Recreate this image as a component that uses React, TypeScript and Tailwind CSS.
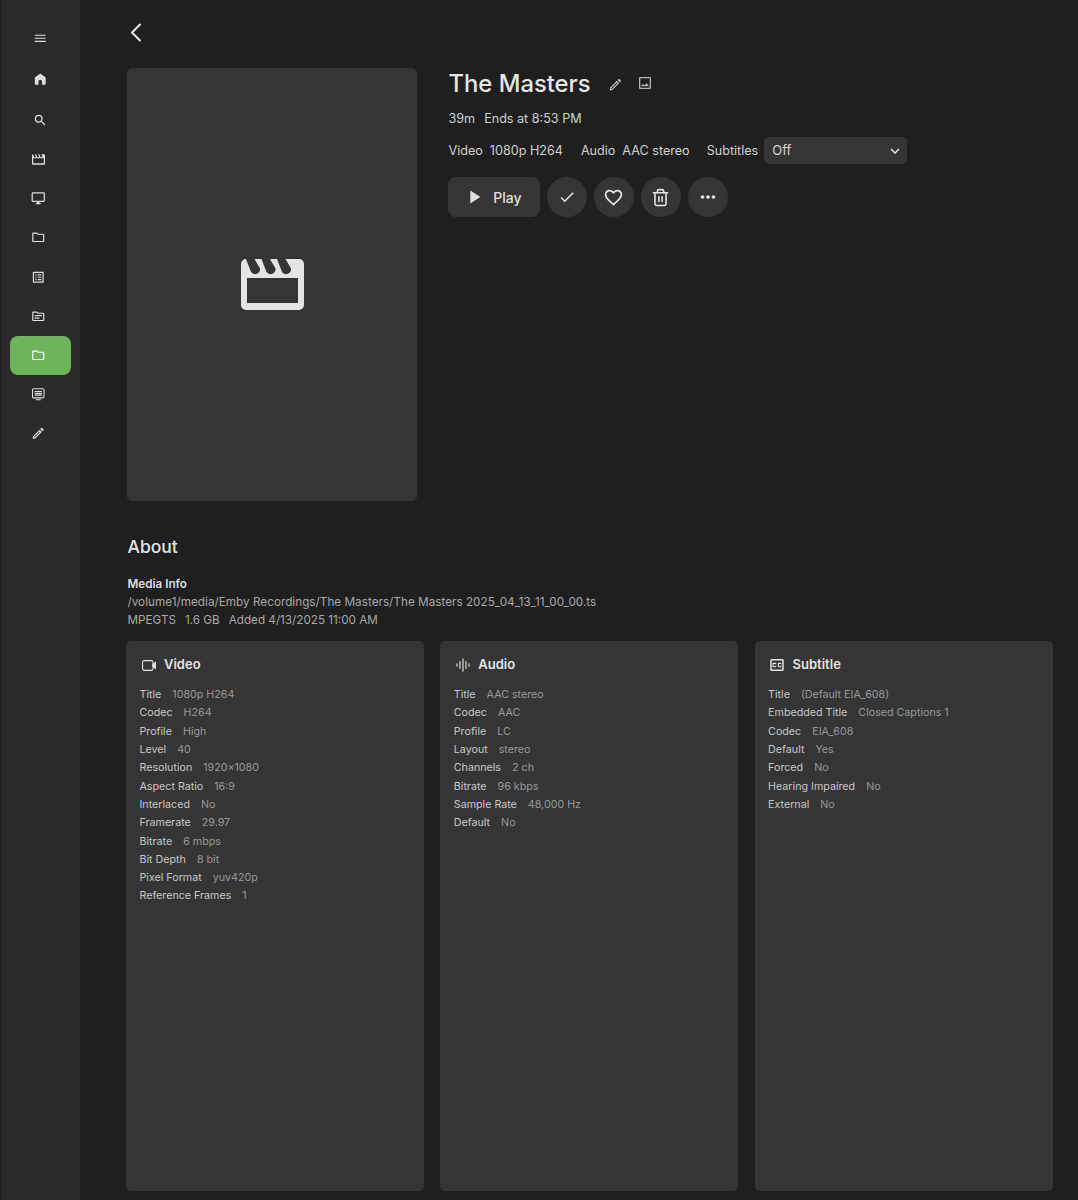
import type { ReactNode } from 'react'
import {
  MdMenu, MdSearch, MdOutlineDesktopWindows, MdOutlineFolder, MdOutlineListAlt, MdOutlineTopic,
  MdOutlineEdit, MdOutlineImage, MdCheck, MdFavoriteBorder, MdMoreHoriz, MdPlayArrow,
  MdKeyboardArrowDown, MdOutlineClosedCaption,
} from 'react-icons/md'
import { Trash2 } from 'lucide-react'

const FONT = 'font-["Inter","Liberation_Sans",sans-serif]'

// clapperboard with the slanted rounded notches, the md one has square cuts
function Clapper({ className }: { className?: string }) {
  const notch = (x: number) => `M${x + 5} 0H${x + 13.5}L${x + 19} 9.5A5 5 0 0 1 ${x + 10} 13Z`
  return (
    <svg viewBox="0 0 63 51" className={className} fill="currentColor" fillRule="evenodd">
      <path
        d={`M5 0H58A5 5 0 0 1 63 5V46A5 5 0 0 1 58 51H5A5 5 0 0 1 0 46V5A5 5 0 0 1 5 0Z M6 19V44H57V19Z ${notch(0)} ${notch(15.5)} ${notch(31)}`}
      />
    </svg>
  )
}

function HomeIcon() {
  return (
    <svg viewBox="0 0 24 24" className="size-[14.5px]" fill="currentColor">
      <path d="M12 2.5 3.6 8.8A1.5 1.5 0 0 0 3 10v9.5A1.5 1.5 0 0 0 4.5 21H9v-5a3 3 0 0 1 6 0v5h4.5a1.5 1.5 0 0 0 1.5-1.5V10a1.5 1.5 0 0 0-.6-1.2Z" />
    </svg>
  )
}

function ScreenListIcon() {
  return (
    <svg viewBox="0 0 24 24" className="size-[14.5px]" fill="none" stroke="currentColor" strokeWidth="1.8">
      <rect x="2.5" y="3" width="19" height="15" rx="2" />
      <path d="M8 21h8M6 7.5h12M6 10.5h12M6 13.5h12" />
    </svg>
  )
}

function CameraIcon() {
  return (
    <svg viewBox="0 0 14 11" className="h-[11px] w-[14px]" fill="none" stroke="currentColor" strokeWidth="1.1">
      <rect x="0.6" y="0.6" width="10.4" height="9.8" rx="1.6" />
      <path d="M11 4.5 13.4 2.6v5.8L11 6.5Z" fill="currentColor" />
    </svg>
  )
}

function WaveIcon() {
  return (
    <svg viewBox="0 0 14 14" className="size-[14px]" fill="none" stroke="currentColor" strokeWidth="1.1" strokeLinecap="round">
      <path d="M1 5.8v2.4M4 3.5v7M7 .8v12.4M10 3.5v7M13 5.8v2.4" />
    </svg>
  )
}

const NAV: { icon: ReactNode; cls?: string; active?: boolean }[] = [
  { icon: <MdMenu />, cls: 'h-[39px] pr-px' },
  { icon: <HomeIcon />, cls: 'h-[42.5px] pr-px' },
  { icon: <MdSearch />, cls: 'h-[39.2px] pr-px' },
  { icon: <Clapper className="h-[11px] w-[13px]" />, cls: 'h-[39.2px] pr-[4px]' },
  { icon: <MdOutlineDesktopWindows />, cls: 'h-[39.2px] pr-[4px]' },
  { icon: <MdOutlineFolder />, cls: 'h-[39.2px] pr-[4px]' },
  { icon: <MdOutlineListAlt />, cls: 'h-[39.2px] pr-[4px]' },
  { icon: <MdOutlineTopic />, cls: 'h-[39.2px] pr-[4px]' },
  { icon: <MdOutlineFolder />, cls: 'h-[39.2px] pr-[4px]', active: true },
  { icon: <ScreenListIcon />, cls: 'h-[39.2px] pr-[4px]' },
  { icon: <MdOutlineEdit />, cls: 'h-[39.2px] pr-[4px]' },
]

const VIDEO = [
  ['Title', '1080p H264'], ['Codec', 'H264'], ['Profile', 'High'], ['Level', '40'],
  ['Resolution', '1920x1080'], ['Aspect Ratio', '16:9'], ['Interlaced', 'No'], ['Framerate', '29.97'],
  ['Bitrate', '6 mbps'], ['Bit Depth', '8 bit'], ['Pixel Format', 'yuv420p'], ['Reference Frames', '1'],
]
const AUDIO = [
  ['Title', 'AAC stereo'], ['Codec', 'AAC'], ['Profile', 'LC'], ['Layout', 'stereo'],
  ['Channels', '2 ch'], ['Bitrate', '96 kbps'], ['Sample Rate', '48,000 Hz'], ['Default', 'No'],
]
const SUBTITLE = [
  ['Title', '(Default EIA_608)'], ['Embedded Title', 'Closed Captions 1'], ['Codec', 'EIA_608'], ['Default', 'Yes'],
  ['Forced', 'No'], ['Hearing Impaired', 'No'], ['External', 'No'],
]

function Stream({ icon, title, rows }: { icon: ReactNode; title: string; rows: string[][] }) {
  return (
    <div className="h-[550px] w-[298px] rounded-[5px] bg-[#353535] pl-[13.5px] pt-[15px]">
      <div className="flex h-[18px] items-center gap-[6.5px] text-[13px] font-semibold text-[#e4e4e4]">
        <span className="flex w-[18px] justify-center text-[18px]">{icon}</span>
        {title}
      </div>
      <div className="mt-[12px]">
        {rows.map(([k, v]) => (
          <div key={k} className="flex h-[18.3px] items-center gap-[11px] text-[10.7px]">
            <span className="text-[#c8c8c8]">{k}</span>
            <span className="text-[#999999]">{v}</span>
          </div>
        ))}
      </div>
    </div>
  )
}

function RoundBtn({ children }: { children: ReactNode }) {
  return (
    <button className="flex size-10 items-center justify-center rounded-full bg-[#353535] text-[#e4e4e4]">
      {children}
    </button>
  )
}

export default function App() {
  return (
    <div className={`flex h-[1200px] overflow-hidden bg-[#1f1f1f] ${FONT}`}>
      <aside className="flex w-20 shrink-0 flex-col border-l border-[#222] bg-[#2a2a2a] pl-[9px] pt-[19px]">
        {NAV.map((n, i) => (
          <div
            key={i}
            className={`flex w-[61px] items-center justify-center rounded-lg text-[14.5px] ${n.cls} ${n.active ? 'bg-[#6cb35a] text-white' : 'text-[#dedede]'}`}
          >
            {n.icon}
          </div>
        ))}
      </aside>

      <main className="min-w-0 flex-1 pl-[47px]">
        <div className="flex h-[68px] items-start pl-[3px] pt-[23px] text-[#e6e6e6]">
          <svg viewBox="0 0 12 19" className="h-[19px] w-[12px]" fill="none" stroke="currentColor" strokeWidth="2" strokeLinecap="round" strokeLinejoin="round">
            <path d="M10 1.5 2 9.5l8 8" />
          </svg>
        </div>

        <div className="flex">
          <div className="flex h-[433px] w-[290px] items-center justify-center rounded-[5px] bg-[#353535] text-[#e4e4e4]">
            <Clapper className="h-[51px] w-[63px]" />
          </div>

          <div className="ml-[31.5px] text-[12.6px] text-[#cfcfcf]">
            <div className="flex h-[32px] items-center">
              <h1 className="text-[23.8px] font-medium text-[#e6e6e6]">The Masters</h1>
              <MdOutlineEdit className="ml-[17px] text-[15px] text-[#b5b5b5]" />
              <MdOutlineImage className="ml-[14px] -translate-y-px text-[16px] text-[#b5b5b5]" />
            </div>
            <div className="mt-[10px] flex h-[18px] items-center gap-[9px]">
              <span>39m</span>
              <span>Ends at 8:53 PM</span>
            </div>
            <div className="mt-[9px] flex h-[27px] items-center">
              <span className="translate-y-px">Video</span>
              <span className="ml-[7px] translate-y-px">1080p H264</span>
              <span className="ml-[18px] translate-y-px">Audio</span>
              <span className="ml-[7px] translate-y-px">AAC stereo</span>
              <span className="ml-[17px] translate-y-px">Subtitles</span>
              <div className="ml-[6px] flex h-[27px] w-[143px] items-center justify-between rounded-[5px] bg-[#353535] pl-[8px] pr-[3px] text-[13px] text-[#d5d5d5]">
                Off
                <MdKeyboardArrowDown className="text-[18px] text-[#e4e4e4]" />
              </div>
            </div>
            <div className="-ml-px mt-[13px] flex items-center gap-[7px]">
              <button className="flex h-10 w-[92px] items-center justify-center gap-[8px] rounded-lg bg-[#353535] text-[14px] font-medium text-[#e0e0e0]">
                <MdPlayArrow className="ml-[-2px] text-[22px]" />
                Play
              </button>
              <RoundBtn><MdCheck className="text-[18px]" /></RoundBtn>
              <RoundBtn><MdFavoriteBorder className="text-[21px]" /></RoundBtn>
              <RoundBtn><Trash2 size={19} strokeWidth={2} /></RoundBtn>
              <RoundBtn><MdMoreHoriz className="text-[22px]" /></RoundBtn>
            </div>
          </div>
        </div>

        <div className="pl-[0.5px]">
          <h2 className="mt-[34px] h-[24px] text-[17.5px] font-medium leading-[24px] text-[#e6e6e6]">About</h2>
          <div className="mt-[16px] text-[11.7px] font-semibold leading-[18px] text-[#dddddd]">Media Info</div>
          <div className="text-[11.75px] leading-[18px] text-[#a8a8a8]">
            /volume1/media/Emby Recordings/The Masters/The Masters 2025_04_13_11_00_00.ts
          </div>
          <div className="flex gap-[9px] text-[11.7px] leading-[18px] text-[#a8a8a8]">
            <span>MPEGTS</span>
            <span>1.6 GB</span>
            <span>Added 4/13/2025 11:00 AM</span>
          </div>
        </div>

        <div className="-ml-px mt-[12px] flex gap-[16.3px]">
          <Stream icon={<CameraIcon />} title="Video" rows={VIDEO} />
          <Stream icon={<WaveIcon />} title="Audio" rows={AUDIO} />
          <Stream icon={<MdOutlineClosedCaption />} title="Subtitle" rows={SUBTITLE} />
        </div>
      </main>
    </div>
  )
}
